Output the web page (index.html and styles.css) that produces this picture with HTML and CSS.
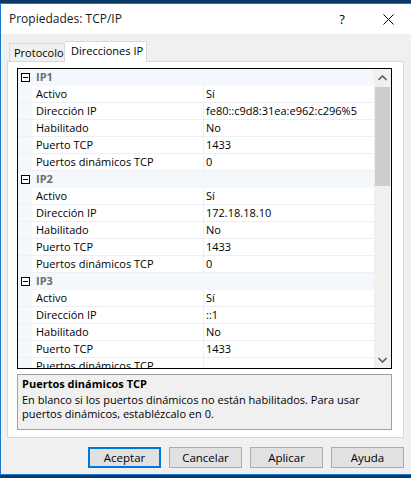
FILE: index.html
```html
<!DOCTYPE html>
<html lang="es">
<head>
<meta charset="utf-8">
<title>Propiedades: TCP/IP</title>
<link rel="stylesheet" href="styles.css">
</head>
<body>
<div class="screen">
  <div class="desk-strip"></div>
  <div class="window">
    <div class="titlebar">
      <span class="title">Propiedades: TCP/IP</span>
      <span class="help">?</span>
      <span class="close">
        <svg width="11" height="11" viewBox="0 0 11 11"><path d="M0.5 0.5 L10.5 10.5 M10.5 0.5 L0.5 10.5" stroke="#000" stroke-width="1" fill="none"/></svg>
      </span>
    </div>
    <div class="body">
      <div class="tabs">
        <div class="tab">Protocolo</div>
        <div class="tab active">Direcciones IP</div>
      </div>
      <div class="panel">
        <div class="grid">
          <div class="rows">
            <div class="row cat"><span class="gutter"><span class="minus"></span></span><span class="cat-name">IP1</span></div>
            <div class="row"><span class="gutter"></span><span class="name">Activo</span><span class="value">Sí</span></div>
            <div class="row"><span class="gutter"></span><span class="name">Dirección IP</span><span class="value">fe80::c9d8:31ea:e962:c296%5</span></div>
            <div class="row"><span class="gutter"></span><span class="name">Habilitado</span><span class="value">No</span></div>
            <div class="row"><span class="gutter"></span><span class="name">Puerto TCP</span><span class="value">1433</span></div>
            <div class="row"><span class="gutter"></span><span class="name">Puertos dinámicos TCP</span><span class="value">0</span></div>
            <div class="row cat"><span class="gutter"><span class="minus"></span></span><span class="cat-name">IP2</span></div>
            <div class="row"><span class="gutter"></span><span class="name">Activo</span><span class="value">Sí</span></div>
            <div class="row"><span class="gutter"></span><span class="name">Dirección IP</span><span class="value">172.18.18.10</span></div>
            <div class="row"><span class="gutter"></span><span class="name">Habilitado</span><span class="value">No</span></div>
            <div class="row"><span class="gutter"></span><span class="name">Puerto TCP</span><span class="value">1433</span></div>
            <div class="row"><span class="gutter"></span><span class="name">Puertos dinámicos TCP</span><span class="value">0</span></div>
            <div class="row cat"><span class="gutter"><span class="minus"></span></span><span class="cat-name">IP3</span></div>
            <div class="row"><span class="gutter"></span><span class="name">Activo</span><span class="value">Sí</span></div>
            <div class="row"><span class="gutter"></span><span class="name">Dirección IP</span><span class="value">::1</span></div>
            <div class="row"><span class="gutter"></span><span class="name">Habilitado</span><span class="value">No</span></div>
            <div class="row"><span class="gutter"></span><span class="name">Puerto TCP</span><span class="value">1433</span></div>
            <div class="row"><span class="gutter"></span><span class="name">Puertos dinámicos TCP</span><span class="value"></span></div>
          </div>
          <div class="scrollbar">
            <div class="arrow">
              <svg width="9" height="6" viewBox="0 0 9 6"><path d="M0.5 5 L4.5 1 L8.5 5" stroke="#606060" stroke-width="1.6" fill="none"/></svg>
            </div>
            <div class="track"><div class="thumb"></div></div>
            <div class="arrow">
              <svg width="9" height="6" viewBox="0 0 9 6"><path d="M0.5 1 L4.5 5 L8.5 1" stroke="#606060" stroke-width="1.6" fill="none"/></svg>
            </div>
          </div>
        </div>
        <div class="desc">
          <div class="desc-title">Puertos dinámicos TCP</div>
          <div class="desc-text">En blanco si los puertos dinámicos no están habilitados. Para usar<br>puertos dinámicos, establézcalo en 0.</div>
        </div>
      </div>
      <div class="buttons">
        <button class="btn default">Aceptar</button>
        <button class="btn">Cancelar</button>
        <button class="btn">Aplicar</button>
        <button class="btn">Ayuda</button>
      </div>
    </div>
  </div>
  <div class="desk-strip"></div>
</div>
</body>
</html>
```
FILE: styles.css
```css
* { box-sizing: border-box; }
html, body { margin: 0; padding: 0; }
body {
  font-family: "Open Sans", "Noto Sans", sans-serif;
  font-size: 11px;
  color: #000;
  background: #0b3a6a;
}
.screen {
  width: 411px;
  height: 478px;
  display: flex;
  flex-direction: column;
  overflow: hidden;
}
.desk-strip {
  height: 3px;
  background: #0b3a6a;
  flex: none;
}
.window {
  flex: none;
  height: 472px;
  border-top: 1px solid #1a78d0;
  border-bottom: 1px solid #1a78d0;
  border-left: 1px solid #1a78d0;
  display: flex;
  flex-direction: column;
}
.titlebar {
  height: 30px;
  background: #fff;
  display: flex;
  align-items: center;
  padding-left: 8px;
  flex: none;
  font-size: 12px;
}
.title {
  flex: 1;
  line-height: 16px;
  color: #1a1a1a;
}
.help {
  width: 46px;
  text-align: center;
  font-size: 13px;
}
.close {
  width: 46px;
  display: flex;
  justify-content: center;
  align-items: center;
}
.body {
  flex: 1;
  background: #f0f0f0;
  padding: 7px 7px 6px 6px;
  display: flex;
  flex-direction: column;
}
.tabs {
  display: flex;
  align-items: flex-end;
  height: 20px;
  padding-left: 2px;
  position: relative;
  z-index: 1;
}
.tab {
  width: 56px;
  height: 18px;
  border: 1px solid #d9d9d9;
  border-bottom: none;
  background: #f0f0f0;
  padding: 0 0 0 4px;
  line-height: 17px;
  white-space: nowrap;
}
.tab.active {
  width: 82px;
  height: 21px;
  margin-bottom: -1px;
  background: #fff;
  padding: 0 0 0 6px;
  line-height: 18px;
  border-left: none;
}
.panel {
  height: 377px;
  background: #fff;
  border: 1px solid #d9d9d9;
  padding: 6px 11px 7px 9px;
  display: flex;
  flex-direction: column;
}
.grid {
  height: 301px;
  border: 1px solid #000;
  display: flex;
  overflow: hidden;
  flex: none;
}
.rows {
  flex: 1;
  overflow: hidden;
}
.row {
  height: 17px;
  display: flex;
  border-bottom: 1px solid #edeff3;
  white-space: nowrap;
}
.gutter {
  width: 14px;
  background: #f4f7fc;
  flex: none;
  position: relative;
}
.name {
  width: 172px;
  flex: none;
  padding-left: 4px;
  line-height: 16px;
  border-right: 1px solid #edeff3;
}
.value {
  flex: 1;
  padding-left: 2px;
  line-height: 16px;
}
.row.cat {
  background: #f4f7fc;
  border-bottom-color: #f4f7fc;
}
.cat-name {
  padding-left: 4px;
  font-weight: bold;
  color: #6d6d6d;
  line-height: 16px;
}
.minus {
  position: absolute;
  left: 3px;
  top: 4px;
  width: 9px;
  height: 9px;
  border: 1px solid #000;
  background: #fff;
}
.minus::after {
  content: "";
  position: absolute;
  left: 1px;
  top: 3px;
  width: 5px;
  height: 1px;
  background: #000;
}
.scrollbar {
  width: 17px;
  flex: none;
  background: #f0f0f0;
  display: flex;
  flex-direction: column;
}
.arrow {
  height: 17px;
  display: flex;
  align-items: center;
  justify-content: center;
  flex: none;
}
.track {
  flex: 1;
  padding: 1px 1px 0;
}
.thumb {
  height: 99px;
  background: #cdcdcd;
}
.desc {
  margin-top: 5px;
  height: 56px;
  border: 1px solid #a0a0a0;
  background: #f0f0f0;
  padding: 1px 4px 0;
  white-space: nowrap;
}
.desc-title {
  font-weight: bold;
  line-height: 15px;
}
.desc-text {
  margin-top: 2px;
  line-height: 14px;
}
.buttons {
  margin-top: 9px;
  display: flex;
  justify-content: flex-end;
  gap: 8px;
}
.btn {
  width: 73px;
  height: 21px;
  background: #e1e1e1;
  border: 1px solid #adadad;
  font-family: inherit;
  font-size: 11.5px;
  color: #000;
  padding: 0;
  line-height: 17px;
}
.btn.default {
  border: 2px solid #0078d7;
}
```
